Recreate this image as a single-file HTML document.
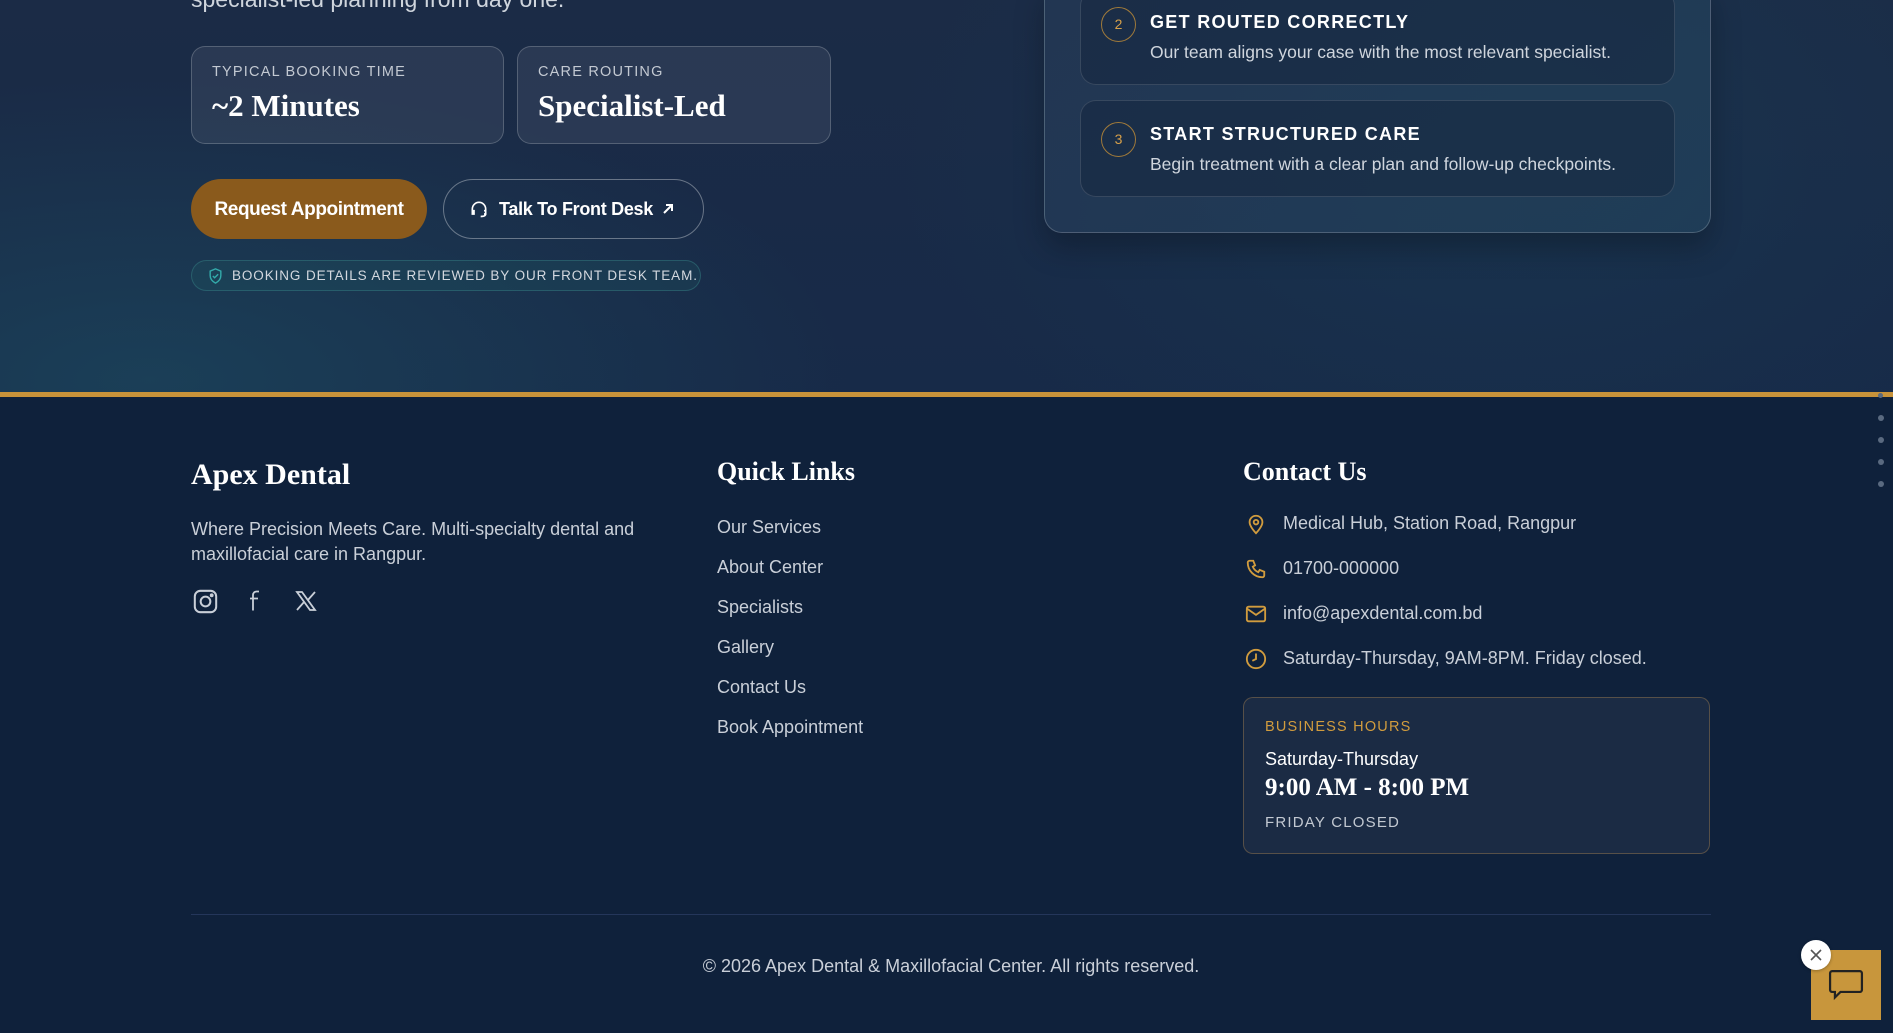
<!DOCTYPE html>
<html><head><meta charset="utf-8"><style>
*{box-sizing:border-box;margin:0;padding:0}
body{width:1893px;height:1033px;overflow:hidden;font-family:"Liberation Sans",sans-serif;color:#fff;background:#0f213b;position:relative}
.top{position:absolute;left:0;top:0;width:1893px;height:393px;background:radial-gradient(ellipse 700px 300px at 150px 380px,rgba(30,80,100,.55),transparent),radial-gradient(ellipse 600px 400px at 1500px 150px,rgba(25,60,85,.5),transparent),linear-gradient(180deg,#1b2b46,#172a48)}
.gold{position:absolute;left:0;top:392px;width:1893px;height:5px;background:#c8933a}
.abs{position:absolute;white-space:nowrap}
.card{position:absolute;border:1px solid rgba(255,255,255,.2);border-radius:14px;background:rgba(255,255,255,.07)}
.lbl{font-size:14.5px;letter-spacing:1.2px;color:#c3c9d2}
.serif{font-family:"Liberation Serif",serif;font-weight:bold}
.step{position:absolute;left:1080px;width:595px;border:1px solid rgba(255,255,255,.13);border-radius:16px;background:rgba(20,35,60,.5)}
.num{position:absolute;left:20px;width:35px;height:35px;border:1px solid #a07a3a;border-radius:50%;color:#d6a04a;font-size:14px;text-align:center;line-height:33px}
.st{position:absolute;left:69px;font-size:18px;font-weight:bold;letter-spacing:1.3px}
.sd{position:absolute;left:69px;font-size:17.5px;color:#cfd5dd}
.lnk{position:absolute;left:717px;font-size:18px;color:#c9cfd8}
.ci{position:absolute;left:1283px;font-size:18px;color:#c9cfd8}
</style></head><body>
<div class="top"></div>
<div class="abs" style="left:191px;top:-14px;font-size:23px;color:#cfd5dd">specialist-led planning from day one.</div>
<div class="card" style="left:191px;top:46px;width:313px;height:98px"><div class="lbl abs" style="left:20px;top:17px">TYPICAL BOOKING TIME</div><div class="serif abs" style="left:20px;top:41px;font-size:31px">~2 Minutes</div></div>
<div class="card" style="left:517px;top:46px;width:314px;height:98px"><div class="lbl abs" style="left:20px;top:17px">CARE ROUTING</div><div class="serif abs" style="left:20px;top:41px;font-size:31px">Specialist-Led</div></div>
<div class="abs" style="left:191px;top:179px;width:236px;height:60px;border-radius:30px;background:#8a5a1c;font-size:19px;font-weight:bold;text-align:center;line-height:62px;letter-spacing:-.4px">Request Appointment</div>
<div class="abs" style="left:443px;top:179px;width:261px;height:60px;border-radius:30px;border:1px solid rgba(255,255,255,.35);font-size:18px;font-weight:bold;line-height:58px;padding-left:55px;letter-spacing:-.3px">Talk To Front Desk
<svg class="abs" style="left:25px;top:19px" width="20" height="20" viewBox="0 0 24 24" fill="none" stroke="#fff" stroke-width="2"><path d="M4 14v-2a8 8 0 0116 0v2M4 14h2v4H4zM18 14h2v4h-2M20 18c0 2-2 3-6 3"/></svg>
<svg class="abs" style="left:217px;top:22px" width="14" height="14" viewBox="0 0 14 14" stroke="#fff" stroke-width="2" fill="none"><path d="M3 11L11 3M5 3h6v6"/></svg></div>
<div class="abs" style="left:191px;top:260px;width:510px;height:31px;border-radius:16px;border:1px solid rgba(60,140,140,.4);background:rgba(30,90,100,.25);font-size:13.5px;letter-spacing:.9px;color:#d3d8df;line-height:29px;padding-left:40px">BOOKING DETAILS ARE REVIEWED BY OUR FRONT DESK TEAM.
<svg class="abs" style="left:16px;top:7px" width="15" height="16" viewBox="0 0 16 18" fill="none" stroke="#3aa" stroke-width="1.6"><path d="M8 1l6 2.5v5c0 4-3 7-6 8.5C5 15.5 2 12.5 2 8.5v-5z"/><path d="M5 9l2 2 4-4"/></svg></div>
<div class="abs" style="left:1044px;top:-20px;width:667px;height:253px;border:1px solid rgba(255,255,255,.2);border-radius:18px;background:linear-gradient(135deg,rgba(40,60,90,.6),rgba(35,70,95,.6));box-shadow:0 15px 30px rgba(0,0,0,.25)"></div>
<div class="step" style="top:-10px;height:95px"><div class="num" style="top:16px">2</div><div class="st" style="top:21px">GET ROUTED CORRECTLY</div><div class="sd" style="top:51px">Our team aligns your case with the most relevant specialist.</div></div>
<div class="step" style="top:100px;height:97px"><div class="num" style="top:21px">3</div><div class="st" style="top:23px">START STRUCTURED CARE</div><div class="sd" style="top:53px">Begin treatment with a clear plan and follow-up checkpoints.</div></div>
<div class="gold"></div>
<div class="serif abs" style="left:191px;top:458px;font-size:30px">Apex Dental</div>
<div class="abs" style="left:191px;top:517px;font-size:18px;line-height:25px;color:#c9cfd8;width:470px;white-space:normal">Where Precision Meets Care. Multi-specialty dental and maxillofacial care in Rangpur.</div>
<svg class="abs" style="left:192px;top:588px" width="27" height="27" viewBox="0 0 24 24" fill="none" stroke="#c9cfd8" stroke-width="1.8"><rect x="2.5" y="2.5" width="19" height="19" rx="5"/><circle cx="12" cy="12" r="4.3"/><circle cx="17.5" cy="6.5" r=".8" fill="#c9cfd8"/></svg>
<svg class="abs" style="left:244px;top:588px" width="24" height="25" viewBox="0 0 24 24" fill="none" stroke="#c9cfd8" stroke-width="1.8"><path d="M15 3h-2.5A3.5 3.5 0 009 6.5V22M6 10h8"/></svg>
<svg class="abs" style="left:293px;top:589px" width="26" height="24" viewBox="0 0 24 24" fill="none" stroke="#c9cfd8" stroke-width="1.8"><path d="M3 3h5l13 18h-5zM21 3L13.5 11.5M3 21l7.5-8.5"/></svg>
<div class="serif abs" style="left:717px;top:457px;font-size:26px">Quick Links</div>
<div class="lnk" style="top:517px">Our Services</div><div class="lnk" style="top:557px">About Center</div><div class="lnk" style="top:597px">Specialists</div><div class="lnk" style="top:637px">Gallery</div><div class="lnk" style="top:677px">Contact Us</div><div class="lnk" style="top:717px">Book Appointment</div>
<div class="serif abs" style="left:1243px;top:457px;font-size:26px">Contact Us</div>
<svg class="abs" style="left:1245px;top:513px" width="22" height="22" viewBox="0 0 24 24" fill="none" stroke="#d19c3e" stroke-width="2"><path d="M12 22s7-7 7-12a7 7 0 00-14 0c0 5 7 12 7 12z"/><circle cx="12" cy="10" r="2.5"/></svg>
<div class="ci" style="top:513px">Medical Hub, Station Road, Rangpur</div>
<svg class="abs" style="left:1245px;top:558px" width="22" height="22" viewBox="0 0 24 24" fill="none" stroke="#d19c3e" stroke-width="2"><path d="M5 3h4l2 5-2.5 1.5a11 11 0 006 6L16 13l5 2v4a2 2 0 01-2 2A16 16 0 013 5a2 2 0 012-2z"/></svg>
<div class="ci" style="top:558px">01700-000000</div>
<svg class="abs" style="left:1245px;top:603px" width="22" height="22" viewBox="0 0 24 24" fill="none" stroke="#d19c3e" stroke-width="2"><rect x="2" y="4" width="20" height="16" rx="2"/><path d="M2 6l10 7 10-7"/></svg>
<div class="ci" style="top:603px">info@apexdental.com.bd</div>
<svg class="abs" style="left:1245px;top:648px" width="22" height="22" viewBox="0 0 24 24" fill="none" stroke="#d19c3e" stroke-width="2"><circle cx="12" cy="12" r="10"/><path d="M12 6v6l-4 2"/></svg>
<div class="ci" style="top:648px">Saturday-Thursday, 9AM-8PM. Friday closed.</div>
<div class="abs" style="left:1243px;top:697px;width:467px;height:157px;border:1px solid rgba(200,150,80,.35);border-radius:10px;background:#1b2b44">
<div class="abs" style="left:21px;top:21px;font-size:14.5px;letter-spacing:1.2px;color:#d19c3e">BUSINESS HOURS</div>
<div class="abs" style="left:21px;top:51px;font-size:18px">Saturday-Thursday</div>
<div class="serif abs" style="left:21px;top:76px;font-size:25px">9:00 AM - 8:00 PM</div>
<div class="abs" style="left:21px;top:116px;font-size:15px;letter-spacing:1.2px;color:#c3c9d2">FRIDAY CLOSED</div></div>
<div class="abs" style="left:191px;top:914px;width:1520px;height:1px;background:#24365a"></div>
<div class="abs" style="left:191px;top:956px;width:1520px;text-align:center;font-size:18px;color:#c9cfd8">© 2026 Apex Dental &amp; Maxillofacial Center. All rights reserved.</div>
<div class="abs" style="left:1878px;top:393px;width:5px;height:5px;border-radius:50%;background:#5a6a80"></div>
<div class="abs" style="left:1878px;top:415px;width:6px;height:6px;border-radius:50%;background:#5a6a80"></div>
<div class="abs" style="left:1878px;top:437px;width:6px;height:6px;border-radius:50%;background:#5a6a80"></div>
<div class="abs" style="left:1878px;top:459px;width:6px;height:6px;border-radius:50%;background:#5a6a80"></div>
<div class="abs" style="left:1878px;top:481px;width:6px;height:6px;border-radius:50%;background:#5a6a80"></div>
<div class="abs" style="left:1811px;top:950px;width:70px;height:70px;background:#c8963c"><svg class="abs" style="left:17px;top:18px" width="36" height="34" viewBox="0 0 26 24" fill="none" stroke="#222" stroke-width="1.6"><path d="M3 2h20a1.5 1.5 0 011.5 1.5v12A1.5 1.5 0 0123 17H9l-4 4v-4H3a1.5 1.5 0 01-1.5-1.5v-12A1.5 1.5 0 013 2z"/></svg></div>
<div class="abs" style="left:1801px;top:940px;width:30px;height:30px;border-radius:50%;background:#fff;box-shadow:0 1px 3px rgba(0,0,0,.3)"><svg class="abs" style="left:9px;top:9px" width="12" height="12" viewBox="0 0 12 12" stroke="#555" stroke-width="1.6"><path d="M1 1l10 10M11 1L1 11"/></svg></div>
</body></html>
